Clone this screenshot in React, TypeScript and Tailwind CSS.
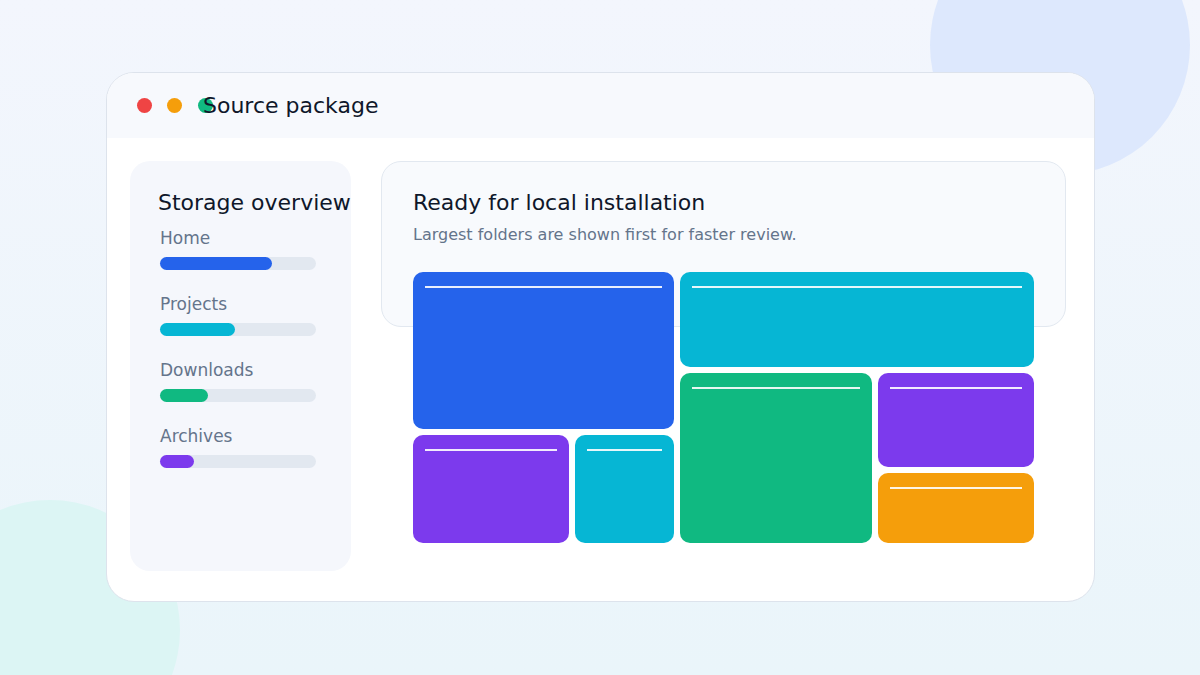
const font = { fontFamily: '"DejaVu Sans", Verdana, sans-serif' };

function Tile({ className }: { className: string }) {
  return (
    <div className={`rounded-[10px] px-3 pt-[14px] ${className}`}>
      <div className="h-[2px] bg-white/90" />
    </div>
  );
}

const folders = [
  { name: 'Home', pct: 72, color: 'bg-[#2563eb]' },
  { name: 'Projects', pct: 48, color: 'bg-[#06b6d4]' },
  { name: 'Downloads', pct: 31, color: 'bg-[#10b981]' },
  { name: 'Archives', pct: 22, color: 'bg-[#7c3aed]' },
];

export default function App() {
  return (
    <div className="relative w-[1200px] h-[675px] overflow-hidden bg-gradient-to-b from-[#f3f6fd] to-[#eaf5fa]" style={font}>
      <div className="absolute -right-[130px] -top-[85px] w-[260px] h-[260px] rounded-full bg-[#dde8fd] left-auto" style={{ right: 10 }} />
      <div className="absolute -left-[80px] top-[500px] w-[260px] h-[260px] rounded-full bg-[#dcf5f4]" />
      <div className="relative ml-[106px] mt-[72px] w-[989px] h-[530px] rounded-[28px] bg-white border border-[#dde3ec] overflow-hidden flex flex-col">
        <div className="h-[65px] bg-[#f7f9fd] flex items-center pl-[30px] shrink-0">
          <div className="w-[15px] h-[15px] rounded-full bg-[#ef4444]" />
          <div className="w-[15px] h-[15px] rounded-full bg-[#f59e0b] ml-[15px]" />
          <div className="w-[15px] h-[15px] rounded-full bg-[#10b981] ml-[16px]" />
          <span className="-ml-[10px] text-[22px] text-[#0f172a]">Source package</span>
        </div>
        <div className="flex pt-[23px] pl-[23px] gap-[30px]">
          <div className="w-[221px] h-[410px] rounded-[20px] bg-[#f5f7fc] pl-[28px] pt-[27px] shrink-0">
            <div className="text-[22px] text-[#0f172a] whitespace-nowrap leading-[30px]">Storage overview</div>
            <div className="mt-[8px] flex flex-col gap-[22px] pl-[2px]">
              {folders.map((f) => (
                <div key={f.name}>
                  <div className="text-[17px] text-[#64748b] leading-[24px]">{f.name}</div>
                  <div className="mt-[7px] w-[156px] h-[13px] rounded-full bg-[#e2e8f0]">
                    <div className={`h-full rounded-full ${f.color}`} style={{ width: `${f.pct}%` }} />
                  </div>
                </div>
              ))}
            </div>
          </div>
          <div className="w-[685px] h-[166px] rounded-[20px] bg-[#f8fafd] border border-[#e2e8f0] pl-[31px] pt-[26px] shrink-0">
            <div className="text-[22px] text-[#0f172a] leading-[30px]">Ready for local installation</div>
            <div className="mt-[6px] text-[16px] text-[#64748b] leading-[22px]">Largest folders are shown first for faster review.</div>
            <div className="mt-[26px] flex gap-[6px]">
              <div className="w-[261px] flex flex-col gap-[6px]">
                <Tile className="h-[157px] bg-[#2563eb]" />
                <div className="flex gap-[6px] h-[108px]">
                  <Tile className="w-[156px] bg-[#7c3aed]" />
                  <Tile className="w-[99px] bg-[#06b6d4]" />
                </div>
              </div>
              <div className="w-[354px] flex flex-col gap-[6px]">
                <Tile className="h-[95px] bg-[#06b6d4]" />
                <div className="flex gap-[6px] h-[170px]">
                  <Tile className="w-[192px] bg-[#10b981]" />
                  <div className="w-[156px] flex flex-col gap-[6px]">
                    <Tile className="h-[94px] bg-[#7c3aed]" />
                    <Tile className="h-[70px] bg-[#f59e0b]" />
                  </div>
                </div>
              </div>
            </div>
          </div>
        </div>
      </div>
    </div>
  );
}
